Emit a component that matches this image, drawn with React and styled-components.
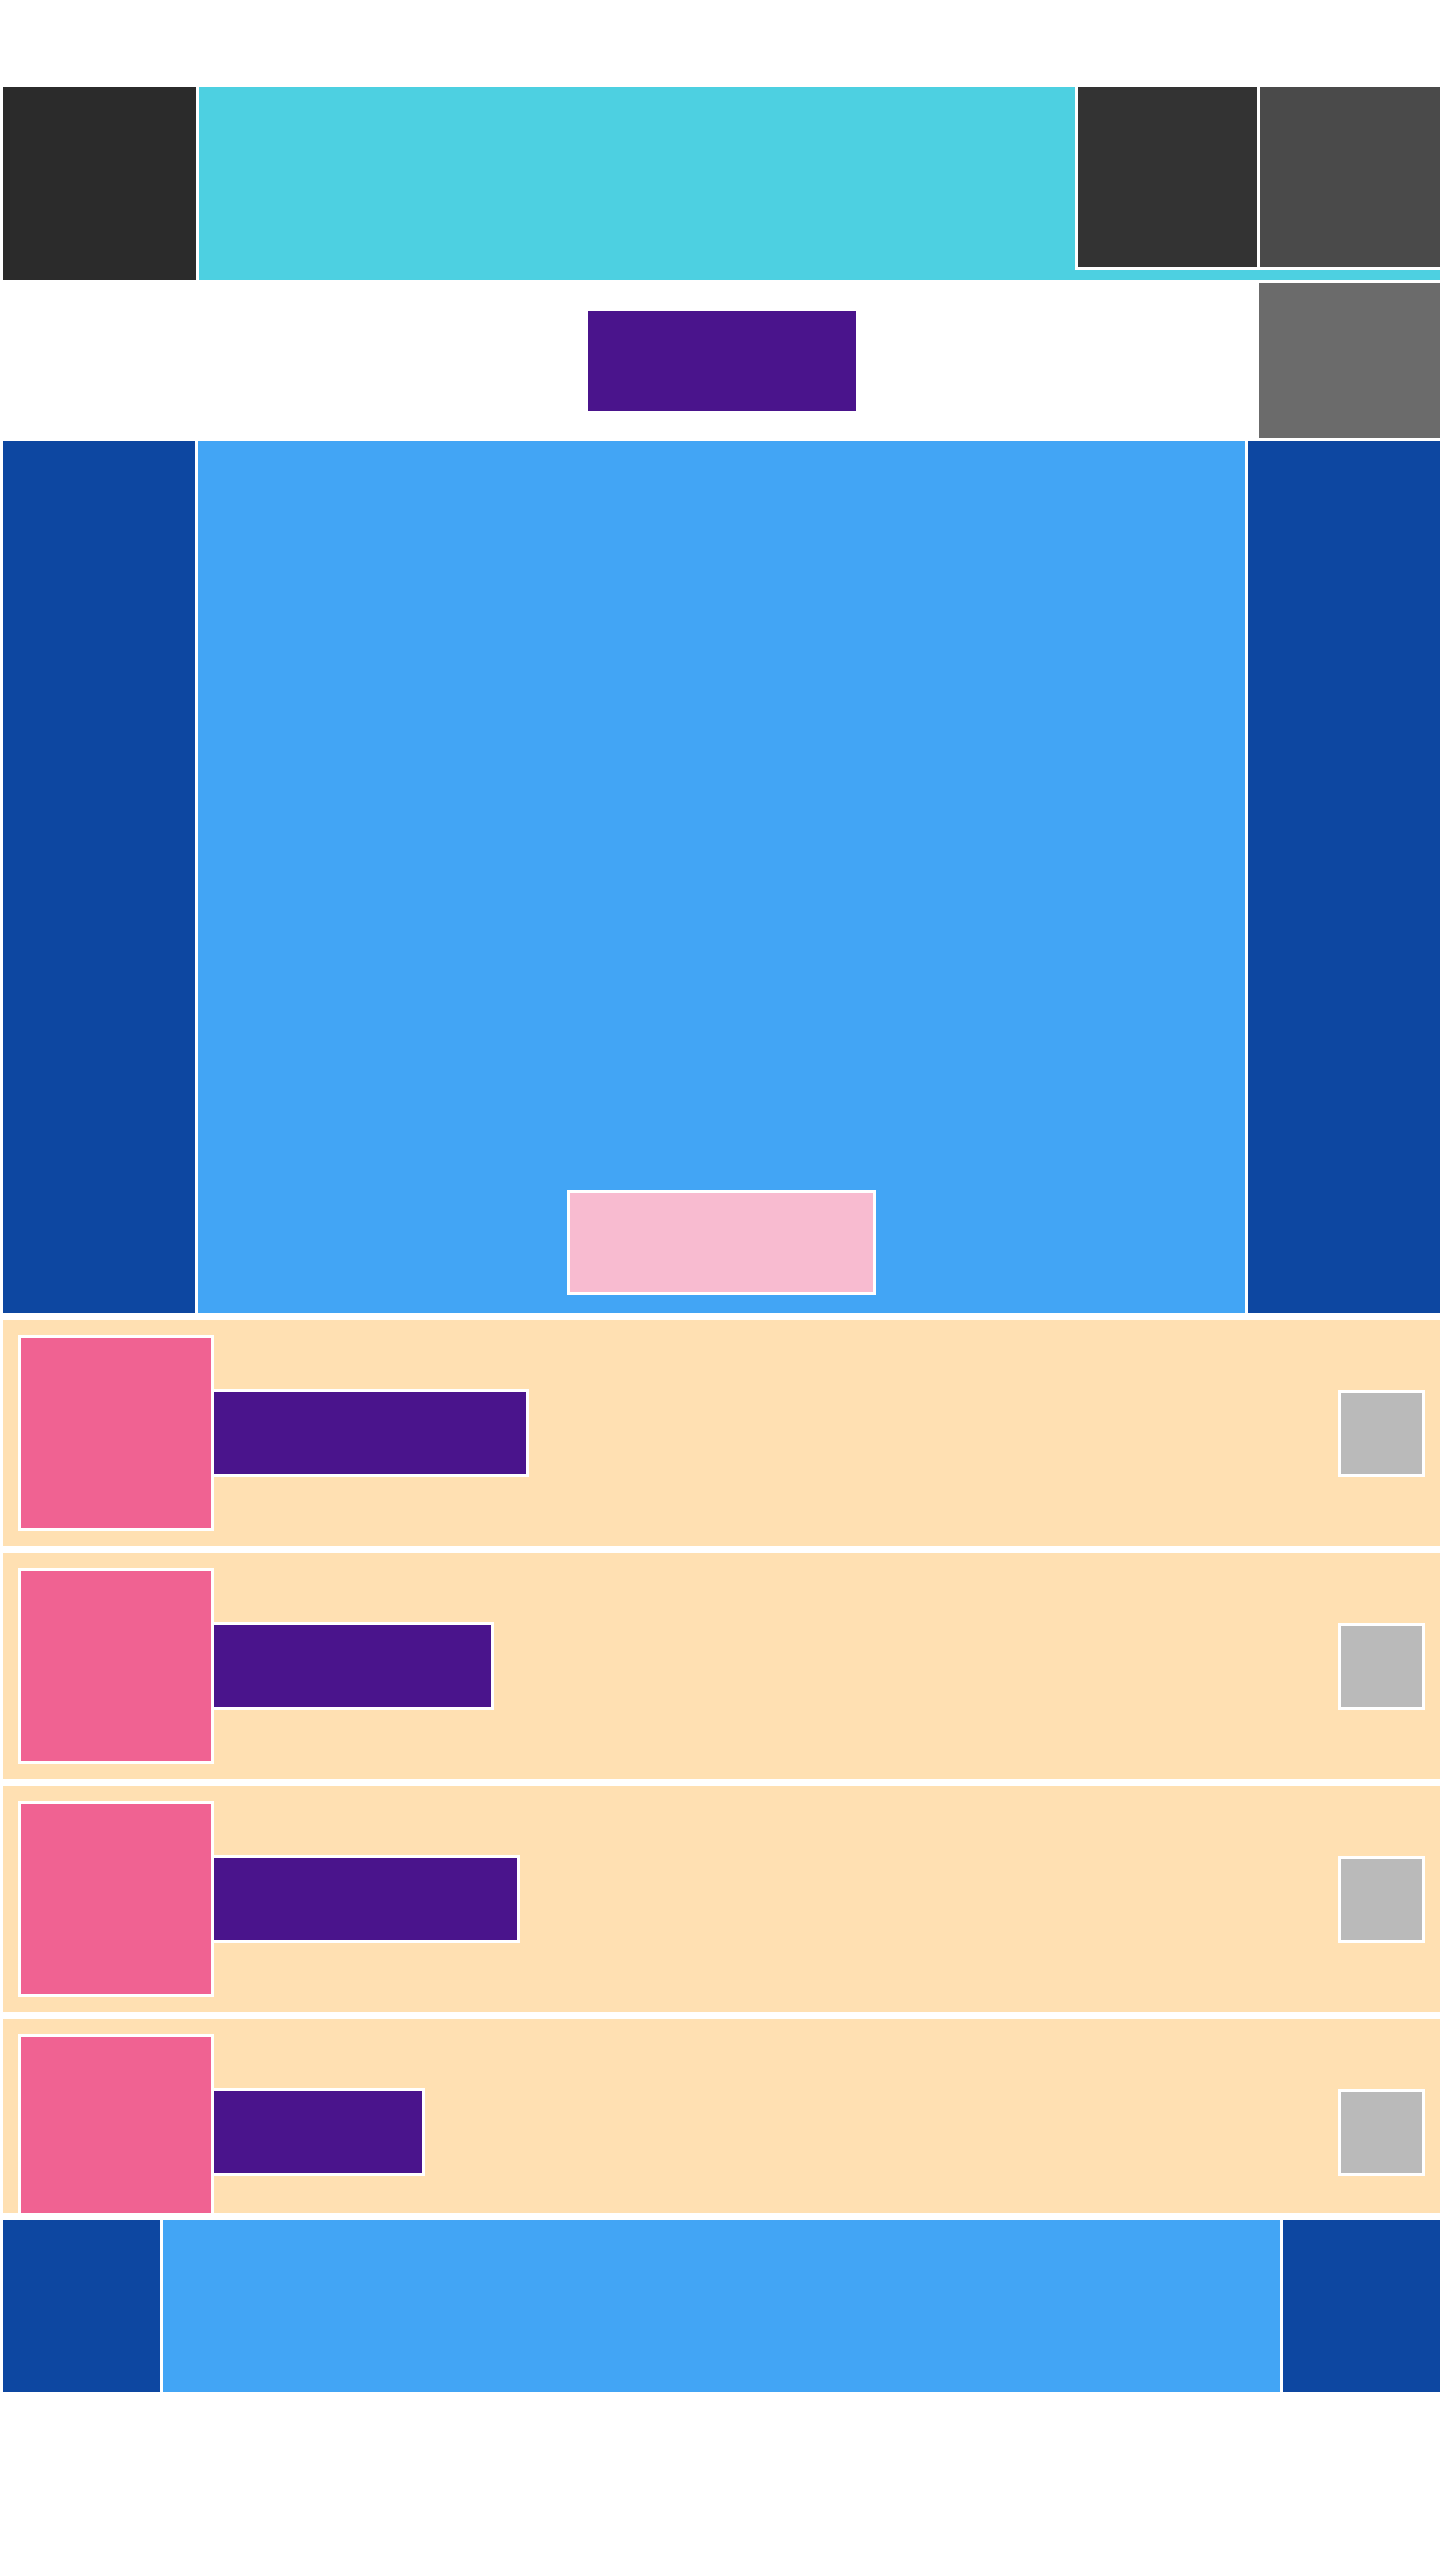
import React from "react";
import styled, { createGlobalStyle } from "styled-components";

const Global = createGlobalStyle`
  html, body {
    margin: 0;
    padding: 0;
    background: #ffffff;
    font-family: "Liberation Sans", Arial, sans-serif;
  }
  * { box-sizing: border-box; }
`;

const Page = styled.div`
  padding: 87px 0 0 3px;
  width: 1440px;
`;

const Header = styled.header`
  display: flex;
  gap: 3px;
  height: 193px;
`;

const Logo = styled.div`
  width: 193px;
  height: 193px;
  background: #2b2b2b;
  flex-shrink: 0;
`;

const HeaderBar = styled.div`
  flex: 1;
  background: #4dd0e1;
  display: flex;
  justify-content: flex-end;
  align-items: flex-start;
`;

const ActionGroup = styled.div`
  display: flex;
  gap: 3px;
  background: #ffffff;
  padding: 0 0 3px 3px;
`;

const ActionTile = styled.div`
  width: ${(p) => p.$w}px;
  height: 180px;
  background: ${(p) => p.$bg};
`;

const SubBar = styled.div`
  height: 161px;
  display: grid;
  grid-template-columns: 1fr auto 1fr;
  align-items: center;
`;

const Title = styled.div`
  grid-column: 2;
  width: 268px;
  height: 100px;
  background: #4a148c;
`;

const Avatar = styled.div`
  grid-column: 3;
  justify-self: end;
  width: 181px;
  height: 155px;
  background: #6b6b6b;
`;

const Hero = styled.section`
  display: flex;
  gap: 3px;
  height: 872px;
`;

const Side = styled.div`
  width: ${(p) => p.$w}px;
  flex-shrink: 0;
  background: #0d47a1;
`;

const HeroCenter = styled.div`
  flex: 1;
  background: #42a5f5;
  display: flex;
  align-items: flex-end;
  justify-content: center;
  padding-bottom: 18px;
`;

const CTA = styled.button`
  width: 309px;
  height: 105px;
  border: 3px solid #ffffff;
  background: #f8bbd0;
  padding: 0;
  cursor: pointer;
`;

const List = styled.div`
  margin-top: 7px;
  height: 893px;
  overflow: hidden;
  display: flex;
  flex-direction: column;
  gap: 7px;
`;

const Row = styled.div`
  flex-shrink: 0;
  height: 226px;
  background: #ffe0b2;
  padding: 0 15px;
  display: flex;
  align-items: center;
`;

const Thumb = styled.div`
  width: 196px;
  height: 196px;
  border: 3px solid #ffffff;
  background: #f06292;
  flex-shrink: 0;
`;

const RowTitle = styled.div`
  width: ${(p) => p.$w}px;
  height: 88px;
  border: 3px solid #ffffff;
  border-left-width: 0;
  background: #4a148c;
`;

const RowAction = styled.div`
  margin-left: auto;
  width: 87px;
  height: 87px;
  border: 3px solid #ffffff;
  background: #bababa;
`;

const Footer = styled.footer`
  margin-top: 7px;
  display: flex;
  gap: 3px;
  height: 172px;
`;

const FooterCenter = styled.div`
  flex: 1;
  background: #42a5f5;
`;

const rows = [315, 280, 306, 211];

export default function App() {
  return (
    <>
      <Global />
      <Page>
        <Header>
          <Logo />
          <HeaderBar>
            <ActionGroup>
              <ActionTile $w={179} $bg="#333333" />
              <ActionTile $w={180} $bg="#4a4a4a" />
            </ActionGroup>
          </HeaderBar>
        </Header>
        <SubBar>
          <Title />
          <Avatar />
        </SubBar>
        <Hero>
          <Side $w={192} />
          <HeroCenter>
            <CTA aria-label="action" />
          </HeroCenter>
          <Side $w={192} />
        </Hero>
        <List>
          {rows.map((w, i) => (
            <Row key={i}>
              <Thumb />
              <RowTitle $w={w} />
              <RowAction />
            </Row>
          ))}
        </List>
        <Footer>
          <Side $w={157} />
          <FooterCenter />
          <Side $w={157} />
        </Footer>
      </Page>
    </>
  );
}
